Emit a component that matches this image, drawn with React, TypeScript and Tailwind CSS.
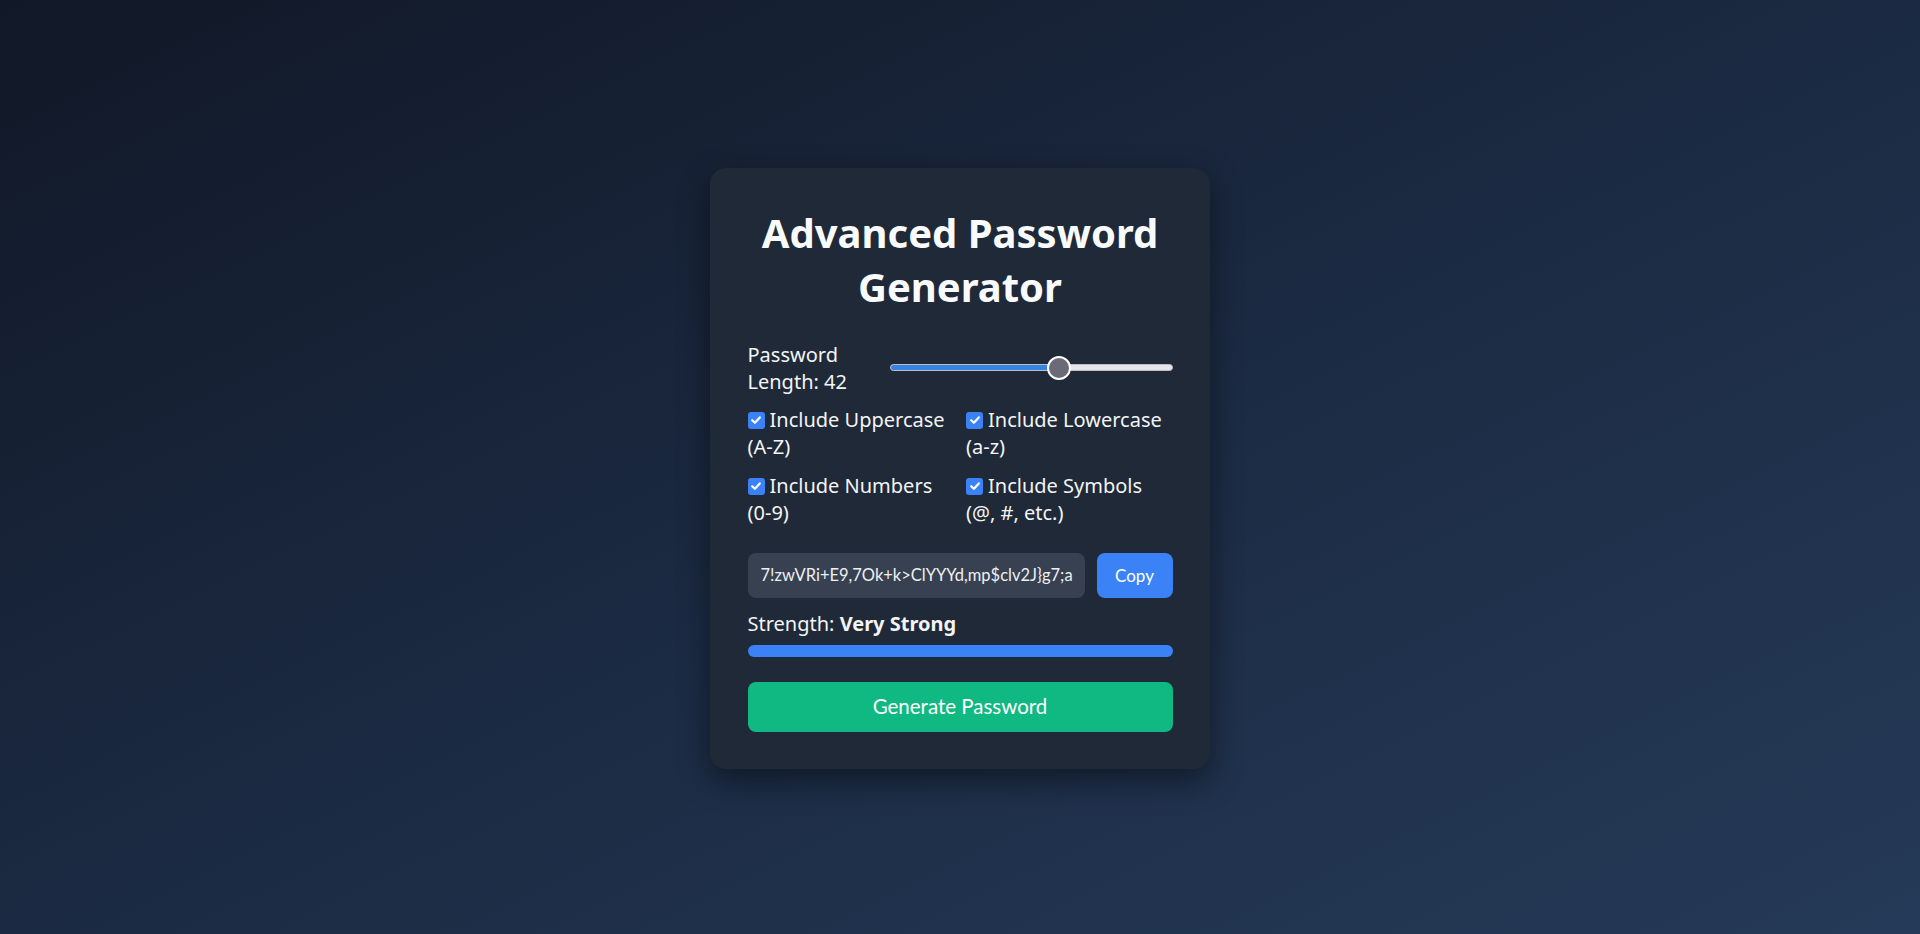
import { useState } from 'react';

const OPTIONS = [
  { key: 'upper', label: 'Include Uppercase (A-Z)' },
  { key: 'lower', label: 'Include Lowercase (a-z)' },
  { key: 'numbers', label: 'Include Numbers (0-9)' },
  { key: 'symbols', label: 'Include Symbols (@, #, etc.)' },
];

const MIN = 8;
const MAX = 64;
const PASSWORD = '7!zwVRi+E9,7Ok+k>ClYYYd,mp$clv2J}g7;a';

function Check() {
  return (
    <span className="inline-flex h-[17px] w-[17px] items-center justify-center rounded-[3px] bg-[#3b82f6] align-middle mr-[5px] -mt-[3px]">
      <svg width="12" height="12" viewBox="0 0 12 12" fill="none">
        <path d="M2.2 6.2 L4.9 8.8 L9.8 3.4" stroke="white" strokeWidth="2.2" strokeLinecap="round" strokeLinejoin="round" />
      </svg>
    </span>
  );
}

export default function App() {
  const [length] = useState(42);
  const pct = (length - MIN) / (MAX - MIN);

  return (
    <div
      className="min-h-screen flex items-center justify-center bg-gradient-to-br from-[#111827] via-[#1b2a42] to-[#253a58] text-[#f3f4f6]"
      style={{ fontFamily: '"Noto Sans", "Open Sans", sans-serif' }}
    >
      <div className="mt-[3px] w-[500px] rounded-2xl bg-[#1f2937] px-[37.5px] pt-[38px] pb-[37.5px] shadow-[0_12px_32px_rgba(0,0,0,0.45)]">
        <h1 className="text-center text-[40px] font-bold leading-[1.362] text-[#f9fafb]">
          Advanced Password Generator
        </h1>

        {/* Length slider */}
        <div className="mt-[26px] flex items-center text-[20px] leading-[1.362]">
          <span className="w-[142px] shrink-0">Password Length: {length}</span>
          <div className="relative flex-1 h-[24px] flex items-center">
            <div className="h-[7px] w-full rounded-full bg-[#e6e5ec] border border-[#bdbcc6] overflow-hidden">
              <div className="h-full bg-[#3584e4]" style={{ width: `${12 + pct * (283 - 24)}px` }} />
            </div>
            <div
              className="absolute top-0 h-[24px] w-[24px] rounded-full bg-[#6b6a79] border-2 border-white"
              style={{ left: `${pct * (283 - 24)}px` }}
            />
          </div>
        </div>

        {/* Options */}
        <div className="mt-[11px] grid grid-cols-2 gap-x-[12px] gap-y-[11.5px] text-[20px] leading-[1.362]">
          {OPTIONS.map((o) => (
            <label key={o.key} className="block">
              <Check />
              {o.label}
            </label>
          ))}
        </div>

        {/* Output */}
        <div
          className="mt-[26.5px] flex gap-[12px]"
          style={{ fontFamily: 'Lato, "Noto Sans", sans-serif' }}
        >
          <div className="h-[45px] flex-1 min-w-0 rounded-lg bg-[#374151] pl-[13px] pr-[12px] text-[16.5px] leading-[45px] text-[#eef0f3]">
            <div className="overflow-hidden whitespace-nowrap">{PASSWORD}</div>
          </div>
          <button className="h-[45px] w-[76px] rounded-lg bg-[#3b82f6] text-[17px] text-white">Copy</button>
        </div>

        <div className="mt-[12px] text-[20px] leading-[1.362]">
          Strength: <span className="font-bold">Very Strong</span>
        </div>
        <div className="mt-[7.5px] h-[12px] w-full rounded-full bg-[#3b82f6]" />

        <button
          className="mt-[25px] h-[50px] w-full rounded-lg bg-[#10b981] text-[20.5px] text-white"
          style={{ fontFamily: 'Lato, "Noto Sans", sans-serif' }}
        >
          Generate Password
        </button>
      </div>
    </div>
  );
}
